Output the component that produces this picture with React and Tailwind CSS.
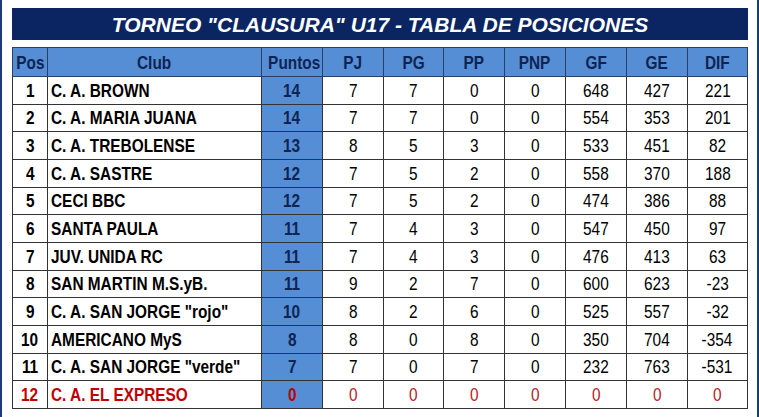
const rows = [
  [1, 'C. A. BROWN', 14, 7, 7, 0, 0, 648, 427, 221],
  [2, 'C. A. MARIA JUANA', 14, 7, 7, 0, 0, 554, 353, 201],
  [3, 'C. A. TREBOLENSE', 13, 8, 5, 3, 0, 533, 451, 82],
  [4, 'C. A. SASTRE', 12, 7, 5, 2, 0, 558, 370, 188],
  [5, 'CECI BBC', 12, 7, 5, 2, 0, 474, 386, 88],
  [6, 'SANTA PAULA', 11, 7, 4, 3, 0, 547, 450, 97],
  [7, 'JUV. UNIDA RC', 11, 7, 4, 3, 0, 476, 413, 63],
  [8, 'SAN MARTIN M.S.yB.', 11, 9, 2, 7, 0, 600, 623, -23],
  [9, 'C. A. SAN JORGE "rojo"', 10, 8, 2, 6, 0, 525, 557, -32],
  [10, 'AMERICANO MyS', 8, 8, 0, 8, 0, 350, 704, -354],
  [11, 'C. A. SAN JORGE "verde"', 7, 7, 0, 7, 0, 232, 763, -531],
  [12, 'C. A. EL EXPRESO', 0, 0, 0, 0, 0, 0, 0, 0],
]

const heads = ['Pos', 'Club', 'Puntos', 'PJ', 'PG', 'PP', 'PNP', 'GF', 'GE', 'DIF']
const widths = ['w-[35px]', 'w-[214px]', 'w-[61px]', 'w-[61px]', 'w-[60px]', 'w-[61px]', 'w-[61px]', 'w-[61px]', 'w-[61px]', 'w-[60px]']

// condensed look (no Arial Narrow here)
function N({ children, left }) {
  return (
    <span className={`inline-block whitespace-nowrap scale-x-[0.81] ${left ? 'origin-left' : 'origin-center'}`}>
      {children}
    </span>
  )
}

export default function App() {
  return (
    <div className="w-[759px] h-[417px] bg-white border-l-2 border-r-2 border-[#1d3a7a] pl-[10px] pt-[8px] font-['Liberation_Sans',Arial,sans-serif]">
      <div className="w-[736px] h-[32px] bg-[#0b2563] flex items-center justify-center">
        <span className="text-white font-bold italic text-[21px] leading-none">
          TORNEO "CLAUSURA" U17 - TABLA DE POSICIONES
        </span>
      </div>
      <table className="mt-[7px] border-collapse table-fixed w-[735px] leading-none">
        <thead>
          <tr className="h-[29px] bg-[#558ed5]">
            {heads.map((h, i) => (
              <th key={h} className={`${widths[i]} border border-[#2b3f66] text-[#0f2452] font-bold text-[19px] text-center p-0`}>
                <N>{h}</N>
              </th>
            ))}
          </tr>
        </thead>
        <tbody>
          {rows.map(r => {
            const red = r[0] === 12
            return (
              <tr key={r[0]} className={`h-[27.67px] ${red ? 'text-[#c00000]' : 'text-black'}`}>
                <td className="border border-[#333] text-center font-bold text-[19px] p-0"><N>{r[0]}</N></td>
                <td className="border border-[#333] text-left font-bold text-[19px] pl-[3px] py-0 overflow-hidden"><N left>{r[1]}</N></td>
                <td className={`border border-[#333] bg-[#558ed5] text-center font-bold text-[19px] p-0 ${red ? '' : 'text-[#0f2452]'}`}><N>{r[2]}</N></td>
                {r.slice(3).map((v, j) => (
                  <td key={j} className={`border border-[#333] text-center text-[19px] p-0 ${red ? 'text-[#b22222]' : ''}`}><N>{v}</N></td>
                ))}
              </tr>
            )
          })}
        </tbody>
      </table>
    </div>
  )
}
